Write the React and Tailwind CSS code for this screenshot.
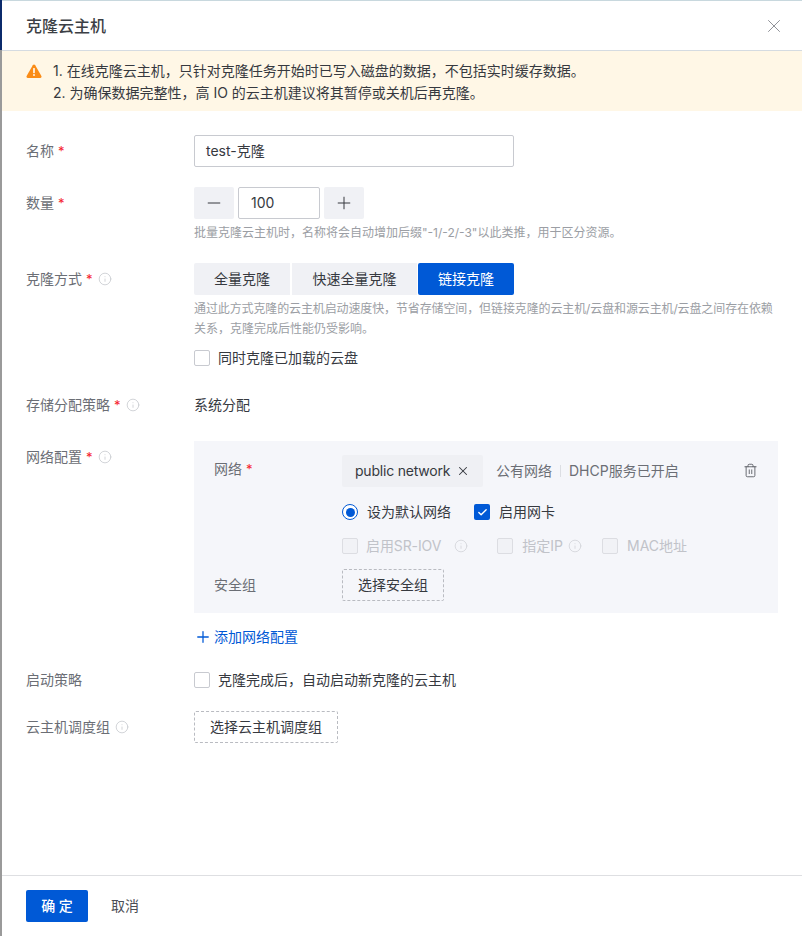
import React from 'react';
import { Plus, Minus, X, Trash2, Check, Info } from 'lucide-react';

function Req() {
  return <span className="text-[#f5222d] ml-[4px] text-[13px]">*</span>;
}

function Tip({ className = 'ml-[5px] text-[#c4c6cc]' }) {
  return <Info size={14} strokeWidth={1.3} className={`shrink-0 ${className}`} />;
}

function Row({ label, required, tip, className = '', children }) {
  return (
    <div className={`flex ${className}`}>
      <div className="w-[168px] shrink-0 flex items-center self-start h-[20px] text-[#6b6e75] mt-[6px]">
        <span>{label}</span>
        {required && <Req />}
        {tip && <Tip />}
      </div>
      <div className="flex-1 min-w-0">{children}</div>
    </div>
  );
}

function Box({ className = '' }) {
  return <span className={`w-[16px] h-[16px] rounded-[2px] border shrink-0 ${className}`} />;
}

function App() {
  return (
    <div className="w-[802px] h-[936px] flex overflow-hidden bg-white text-[14px] leading-[20px] text-[#36393f] font-['Inter','Noto_Sans_CJK_SC',sans-serif]">
      <div className="w-[2px] shrink-0 bg-[#9a9a9a] flex flex-col">
        <div className="h-[50px] bg-[#0b2a6b]" />
      </div>
      <div className="flex-1 flex flex-col min-w-0">
        <div className="h-[51px] shrink-0 flex items-center justify-between pl-[24px] pr-[17px] border-b border-t border-b-[#d5dbe1] border-t-[#c8d8de]">
          <span className="text-[16px] font-medium text-[#3c3f45]">克隆云主机</span>
          <X size={22} strokeWidth={1} className="text-[#85888e]" />
        </div>

        <div className="h-[60px] shrink-0 bg-[#fff7e6] pl-[24px] flex">
          <svg width="16" height="14" viewBox="0 0 16 14" className="mt-[13px] shrink-0">
            <path d="M8 .6c.5 0 .9.3 1.2.7l6.2 10.6c.5.9-.1 2-1.2 2H1.8c-1.1 0-1.7-1.1-1.2-2L6.8 1.3C7.1.9 7.5.6 8 .6z" fill="#fa8c16" />
            <rect x="7.2" y="4" width="1.6" height="5.2" rx=".6" fill="#fff" />
            <circle cx="8" cy="11" r=".9" fill="#fff" />
          </svg>
          <div className="ml-[11px] pt-[9px] leading-[22px]">
            <p>1. 在线克隆云主机，只针对克隆任务开始时已写入磁盘的数据，不包括实时缓存数据。</p>
            <p>2. 为确保数据完整性，高 IO 的云主机建议将其暂停或关机后再克隆。</p>
          </div>
        </div>

        <div className="flex-1 pl-[24px] pt-[24px] pr-[24px]">
          <Row label="名称" required>
            <div className="w-[320px] h-[32px] border border-[#c8cad0] rounded-[2px] px-[11px] flex items-center">test-克隆</div>
          </Row>

          <Row label="数量" required className="mt-[20px]">
            <div className="flex gap-[4px]">
              <div className="w-[40px] h-[32px] rounded-[2px] bg-[#f0f1f5] flex items-center justify-center"><Minus size={20} strokeWidth={1.2} /></div>
              <div className="w-[82px] h-[32px] border border-[#c8cad0] rounded-[2px] pl-[12px] flex items-center">100</div>
              <div className="w-[40px] h-[32px] rounded-[2px] bg-[#f0f1f5] flex items-center justify-center"><Plus size={20} strokeWidth={1.2} /></div>
            </div>
            <p className="mt-[4px] text-[12px] text-[#9b9ea4]">批量克隆云主机时，名称将会自动增加后缀"-1/-2/-3"以此类推，用于区分资源。</p>
          </Row>

          <Row label="克隆方式" required tip className="mt-[20px]">
            <div className="flex">
              <div className="w-[96px] h-[32px] rounded-l-[2px] bg-[#f0f1f5] flex items-center justify-center">全量克隆</div>
              <div className="ml-[2px] w-[125px] h-[32px] bg-[#f0f1f5] flex items-center justify-center">快速全量克隆</div>
              <div className="ml-[1px] w-[96px] h-[32px] rounded-[2px] bg-[#0059d6] text-white flex items-center justify-center">链接克隆</div>
            </div>
            <div className="mt-[4px] text-[12px] leading-[20px] text-[#9b9ea4]">
              <p className="whitespace-nowrap tracking-[-0.12px]">通过此方式克隆的云主机启动速度快，节省存储空间，但链接克隆的云主机/云盘和源云主机/云盘之间存在依赖</p>
              <p>关系，克隆完成后性能仍受影响。</p>
            </div>
            <div className="mt-[9px] flex items-center gap-[8px]">
              <Box className="border-[#c8cad0]" />
              <span>同时克隆已加载的云盘</span>
            </div>
          </Row>

          <Row label="存储分配策略" required tip className="mt-[21px]">
            <p className="mt-[6px]">系统分配</p>
          </Row>

          <Row label="网络配置" required tip className="mt-[26px]">
            <div className="w-[584px] h-[172px] bg-[#f5f6fa] px-[20px] pt-[14px]">
              <div className="flex">
                <div className="w-[128px] shrink-0 flex items-center self-start h-[20px] text-[#6b6e75] mt-[4px]">网络<Req /></div>
                <div className="flex-1">
                  <div className="flex items-center">
                    <div className="w-[141px] h-[32px] bg-[#eff0f4] rounded-[2px] pl-[13px] flex items-center whitespace-nowrap">
                      <span className="tracking-[-0.2px]">public network</span>
                      <X size={14} strokeWidth={1.8} className="ml-[6px]" />
                    </div>
                    <span className="ml-[13px] text-[#6b6e75]">公有网络</span>
                    <span className="mx-[8px] h-[12px] w-px bg-[#dcdee3]" />
                    <span className="text-[#6b6e75]">DHCP服务已开启</span>
                    <Trash2 size={15} strokeWidth={1.3} className="ml-auto -mt-[2px] text-[#4b4e55]" />
                  </div>
                  <div className="mt-[15px] flex items-center">
                    <span className="w-[16px] h-[16px] rounded-full border border-[#0059d6] bg-white flex items-center justify-center">
                      <span className="w-[9px] h-[9px] rounded-full bg-[#0059d6]" />
                    </span>
                    <span className="ml-[9px]">设为默认网络</span>
                    <span className="ml-[23px] w-[16px] h-[16px] rounded-[2px] bg-[#0059d6] flex items-center justify-center">
                      <Check size={11} strokeWidth={3} className="text-white" />
                    </span>
                    <span className="ml-[9px]">启用网卡</span>
                  </div>
                  <div className="mt-[14px] flex items-center text-[#c1c3c9]">
                    <Box className="border-[#dcdde2] bg-[#f1f2f6]" />
                    <span className="ml-[8px] tracking-[-0.1px]">启用SR-IOV</span>
                    <Tip className="ml-[13px] text-[#cfd1d6]" />
                    <Box className="ml-[29px] border-[#dcdde2] bg-[#f1f2f6]" />
                    <span className="ml-[9px]">指定IP</span>
                    <Tip className="ml-[5px] text-[#cfd1d6]" />
                    <Box className="ml-[20px] border-[#dcdde2] bg-[#f1f2f6]" />
                    <span className="ml-[9px]">MAC地址</span>
                  </div>
                </div>
              </div>
              <div className="flex mt-[13px]">
                <div className="w-[128px] shrink-0 self-center text-[#6b6e75]">安全组</div>
                <div className="w-[102px] h-[32px] border border-dashed border-[#b9bbc1] rounded-[2px] flex items-center justify-center">选择安全组</div>
              </div>
            </div>
            <div className="mt-[14px] flex items-center text-[#0059d6]">
              <Plus size={18} strokeWidth={1.7} />
              <span className="ml-[2px]">添加网络配置</span>
            </div>
          </Row>

          <Row label="启动策略" className="mt-[17px]">
            <div className="mt-[6px] flex items-center gap-[8px]">
              <Box className="border-[#c8cad0]" />
              <span>克隆完成后，自动启动新克隆的云主机</span>
            </div>
          </Row>

          <Row label="云主机调度组" tip className="mt-[21px]">
            <div className="w-[144px] h-[32px] border border-dashed border-[#b9bbc1] rounded-[2px] flex items-center justify-center">选择云主机调度组</div>
          </Row>
        </div>

        <div className="h-[61px] shrink-0 border-t border-[#dedfe2] pl-[24px] pt-[14px] flex items-start">
          <button className="w-[62px] h-[32px] rounded-[2px] bg-[#0059d6] text-white font-medium">确 定</button>
          <button className="ml-[23px] h-[32px] text-[#4b4e55]">取消</button>
        </div>
      </div>
    </div>
  );
}

export default App;
